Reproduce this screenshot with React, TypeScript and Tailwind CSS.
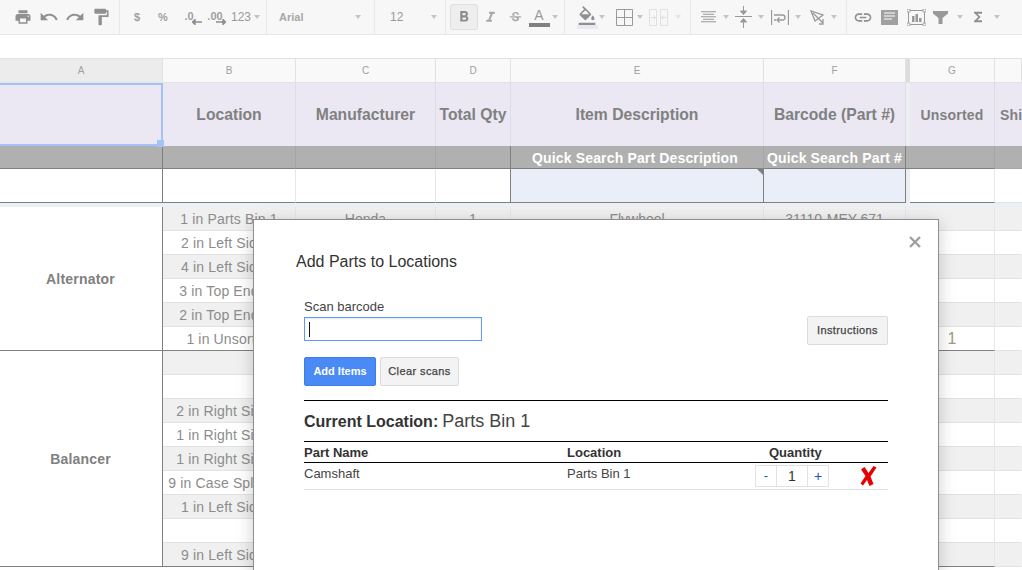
import React from 'react';
import {
  MdPrint, MdUndo, MdRedo, MdFormatPaint, MdFormatBold, MdFormatItalic, MdStrikethroughS,
  MdFormatColorFill, MdLink, MdFunctions,
} from 'react-icons/md';

const gridCols = 'grid grid-cols-[163px_133px_140px_75px_253px_142px_4px_85px_1fr]';
const iconGray = 'text-[#909090]';

// Little dropdown caret used all over the toolbar
function Caret({ className = '' }: { className?: string }) {
  return <span className={`w-0 h-0 border-x-[3.5px] border-x-transparent border-t-[4px] border-t-[#c4c4c4] ${className}`} />;
}

function Divider({ ml = 'ml-0' }: { ml?: string }) {
  return <div className={`w-px h-full bg-[#e8e8e8] shrink-0 ${ml}`} />;
}

function Slot({ w, children }: { w: string; children: React.ReactNode }) {
  return <div className={`${w} h-[34px] shrink-0 flex items-center justify-center ${iconGray}`}>{children}</div>;
}

function Toolbar() {
  return (
    <div className="h-[35px] bg-[#f7f7f7] border-b border-[#e8e8e8] flex items-center overflow-hidden font-['Liberation_Sans',sans-serif]">
      <Slot w="w-[26px] ml-[10px]"><MdPrint size={18} /></Slot>
      <Slot w="w-[26px]"><MdUndo size={20} /></Slot>
      <Slot w="w-[26px]"><MdRedo size={20} /></Slot>
      <Slot w="w-[26px]"><MdFormatPaint size={20} /></Slot>
      <Divider ml="ml-[5px]" />
      <Slot w="w-[26px] ml-[4px]"><span className="text-[11px] font-bold text-[#a0a0a0]">$</span></Slot>
      <Slot w="w-[26px]"><span className="text-[11px] font-bold text-[#a0a0a0]">%</span></Slot>
      <Slot w="w-[26px]">
        <span className="relative text-[11px] font-bold text-[#a0a0a0] -mt-[1px]">
          .0
          <svg className="absolute -right-[8px] top-[11px]" width="10" height="6" viewBox="0 0 10 6"><path d="M10 3H3M3 0.5L0.5 3 3 5.5z" stroke="#909090" strokeWidth="1.4" fill="#909090" /></svg>
        </span>
      </Slot>
      <Slot w="w-[26px]">
        <span className="relative text-[11px] font-bold text-[#a0a0a0] -mt-[1px]">
          .00
          <svg className="absolute -right-[3px] top-[11px]" width="10" height="6" viewBox="0 0 10 6"><path d="M0 3H7M7 0.5L9.5 3 7 5.5z" stroke="#909090" strokeWidth="1.4" fill="#909090" /></svg>
        </span>
      </Slot>
      <div className="w-[38px] h-[34px] shrink-0 flex items-center gap-[3px] pl-[3px] text-[12px] text-[#999999]">
        123<Caret />
      </div>
      <Divider />
      <div className="w-[107px] h-[34px] shrink-0 flex items-center justify-between pl-[12px] pr-[13px] text-[11px] font-bold text-[#a8a8a8]">
        Arial<Caret />
      </div>
      <Divider />
      <div className="w-[70px] h-[34px] shrink-0 flex items-center justify-between pl-[15px] pr-[8px] text-[12px] text-[#999999]">
        12<Caret />
      </div>
      <Divider />
      <div className="w-[28px] h-[26px] ml-[4px] shrink-0 bg-[#eeeeee] border border-[#e0e0e0] rounded-[2px] flex items-center justify-center text-[#8c8c8c]"><MdFormatBold size={18} /></div>
      <Slot w="w-[24px]"><span className="text-[#a8a8a8]"><MdFormatItalic size={17} /></span></Slot>
      <Slot w="w-[20px] ml-[3px]"><span className="text-[#a8a8a8]"><MdStrikethroughS size={15} /></span></Slot>
      <Slot w="w-[24px] ml-[2px]">
        <span className="flex flex-col items-center w-[21px]">
          <span className="text-[14px] leading-[15px] text-[#999999]">A</span>
          <span className="w-[21px] h-[4px] bg-[#808080]" />
        </span>
      </Slot>
      <Caret className="ml-[1px]" />
      <div className="w-px h-full bg-[#e8e8e8] shrink-0 ml-[6px]" />
      <Slot w="w-[22px] ml-[11px]">
        <span className="flex flex-col items-center w-[21px]">
          <MdFormatColorFill size={20} className="-mb-[1px]" />
          <span className="w-[21px] h-[4px] bg-[#ebe8f3]" />
        </span>
      </Slot>
      <Caret className="ml-[1px]" />
      <div className="w-[11px] shrink-0 h-px" />
      <svg width="17" height="17" viewBox="0 0 17 17" className="shrink-0"><path d="M.5.5h16v16H.5zM8.5.5v16M.5 8.5h16" fill="none" stroke="#999999" /></svg>
      <Caret className="ml-[4px]" />
      <svg width="19" height="17" viewBox="0 0 19 17" className="shrink-0 ml-[6px]"><path d="M.5.5h7v16h-7zM11.5.5h7v16h-7zM1.5 8.5h5M4.5 6.5l2 2-2 2M17.5 8.5h-5M14.5 6.5l-2 2 2 2" fill="none" stroke="#e0e0e0" /></svg>
      <Caret className="ml-[7px] !border-t-[#e4e4e4]" />
      <div className="w-px h-full bg-[#e8e8e8] shrink-0 ml-[9px]" />
      <svg width="15" height="12" viewBox="0 0 15 12" className="shrink-0 ml-[10px]"><path d="M0 .75h15M2 3.25h11M0 5.75h15M2 8.25h11M0 10.75h15" stroke="#999999" strokeWidth="1.1" /></svg>
      <Caret className="ml-[7px]" />
      <svg width="17" height="22" viewBox="0 0 17 22" className="shrink-0 ml-[6px]"><path d="M0 10.5h17M8.500 0v5M8.500 16v6M5.500 5h6l-3 3.500zM5.500 16h6l-3-3.500z" stroke="#999999" fill="#999999" /></svg>
      <Caret className="ml-[6px]" />
      <svg width="18" height="15" viewBox="0 0 18 15" className="shrink-0 ml-[7px]"><path d="M.5 0v15M17.500 0v15M3 5h8.500a2.500 2.500 0 0 1 0 5H7M8.500 7.500L6 10l2.500 2.500M3 10h2" fill="none" stroke="#999999" strokeWidth="1.3" /></svg>
      <Caret className="ml-[6px]" />
      <svg width="17" height="15" viewBox="0 0 17 15" className="shrink-0 ml-[9px]"><path d="M1 1l4 10 8-6zM3 3l10 10M13 9v5h-4" fill="none" stroke="#999999" strokeWidth="1.3" /></svg>
      <Caret className="ml-[4px]" />
      <div className="w-px h-full bg-[#e8e8e8] shrink-0 ml-[9px]" />
      <Slot w="w-[20px] ml-[6px]"><MdLink size={21} /></Slot>
      <svg width="17" height="15" viewBox="0 0 17 15" className="shrink-0 ml-[8px]"><path d="M0 0h17v15H0z" fill="#a0a0a0" /><path d="M3 3h11M3 6h11M3 9h8" stroke="#ffffff" /></svg>
      <svg width="19" height="17" viewBox="0 0 19 17" className="shrink-0 ml-[9px]"><path d="M1.500 1.500h16v14h-16z" fill="none" stroke="#999999" /><path d="M0 0h3v3H0zM16 0h3v3h-3zM0 14h3v3H0zM16 14h3v3h-3z" fill="#f7f7f7" stroke="#999999" strokeWidth=".8" /><path d="M5 7h2.500v6H5zM8.500 5h2.500v8H8.500zM12 9h2.500v4H12z" fill="#999999" /></svg>
      <svg width="15" height="13" viewBox="0 0 15 13" className="shrink-0 ml-[7px]"><path d="M0 0h15v2.500L9.500 7v6h-4V7L0 2.500z" fill="#999999" /></svg>
      <Caret className="ml-[9px]" />
      <Slot w="w-[16px] ml-[7px]"><MdFunctions size={20} /></Slot>
      <Caret className="ml-[8px]" />
    </div>
  );
}

// One spreadsheet cell. `dark` swaps the bottom line for the thick-looking sheet border.
function Cell({ children, className = '', dark = false }: { children?: React.ReactNode; className?: string; dark?: boolean }) {
  return (
    <div className={`relative flex items-center justify-center whitespace-nowrap overflow-hidden border-r border-b ${dark ? 'border-b-[#808080]' : 'border-b-[#e2e2e2]'} ${className || 'border-r-[#e6e6e6]'}`}>
      {children}
    </div>
  );
}

const letters = ['A', 'B', 'C', 'D', 'E', 'F', '', 'G', ''];

const heads = ['Location', 'Manufacturer', 'Total Qty', 'Item Description', 'Barcode (Part #)'];

type PartRow = { loc?: string; maker?: string; qty?: string; desc?: string; code?: string; unsorted?: string; dark?: boolean };

const partRows: PartRow[] = [
  { loc: '1 in Parts Bin 1', maker: 'Honda', qty: '1', desc: 'Flywheel', code: '31110-MEY-671' },
  { loc: '2 in Left Side 1' },
  { loc: '4 in Left Side 1' },
  { loc: '3 in Top End 12' },
  { loc: '2 in Top End 12' },
  { loc: '1 in Unsorted', unsorted: '1', dark: true },
  {},
  {},
  { loc: '2 in Right Side 1' },
  { loc: '1 in Right Side 1' },
  { loc: '1 in Right Side 1' },
  { loc: '9 in Case Splitter 1' },
  { loc: '1 in Left Side 1' },
  {},
  { loc: '9 in Left Side 1', dark: true },
];

function Sheet() {
  return (
    <div className={`${gridCols} border-t border-[#e2e2e2] font-['Liberation_Sans',sans-serif]`}>
      {/* Column letters */}
      {letters.map((l, i) =>
        i === 6 ? (
          <div key={i} className="h-[24px] bg-[#dddddd] border-b border-[#e2e2e2]" />
        ) : (
          <div key={i} className={`h-[24px] flex items-center justify-center text-[10px] text-[#a0a0a0] border-r border-b border-[#e2e2e2] ${i === 0 ? 'bg-[#ececec]' : 'bg-[#f9f9f9]'}`}>{l}</div>
        )
      )}

      {/* Title row */}
      <div className="relative h-[63px] bg-[#ebe8f3] border-2 border-[#a3c2f8] border-l-0">
        <span className="absolute -right-[3px] -bottom-[3px] w-[7px] h-[7px] bg-[#a3c2f8] z-10" />
      </div>
      {heads.map((t) => (
        <div key={t} className="h-[63px] bg-[#ebe8f3] border-r border-[#dedde5] flex items-center justify-center text-[15.7px] font-bold text-[#808080] whitespace-nowrap">{t}</div>
      ))}
      <div className="bg-[#eceef2]" />
      <div className="h-[63px] bg-[#ebe8f3] border-r border-[#dedde5] flex items-center justify-center pt-[2px] text-[14px] font-bold tracking-[0.2px] text-[#808080]">Unsorted</div>
      <div className="h-[63px] bg-[#ebe8f3] flex items-center pt-[2px] pl-[5px] text-[14px] font-bold tracking-[0.2px] text-[#808080] overflow-hidden">Shipped</div>

      {/* Quick search labels */}
      <div className="h-[23px] bg-[#b0b0b0] border-r border-r-[#808080] border-b border-b-[#808080]" />
      <div className="bg-[#b0b0b0] border-r border-r-[#a6a6a6] border-b border-b-[#808080]" />
      <div className="bg-[#b0b0b0] border-r border-r-[#a6a6a6] border-b border-b-[#808080]" />
      <div className="bg-[#b0b0b0] border-r border-r-[#808080] border-b border-b-[#808080]" />
      <div className="bg-[#b0b0b0] border-r border-r-[#a6a6a6] border-b border-b-[#808080] flex items-center justify-center pt-[2px] pr-[4px] text-[14px] leading-[18px] font-bold tracking-[0.15px] text-white whitespace-nowrap">Quick Search Part Description</div>
      <div className="bg-[#b0b0b0] border-r border-r-[#808080] border-b border-b-[#808080] flex items-center justify-center pt-[2px] text-[14px] leading-[18px] font-bold tracking-[0.15px] text-white whitespace-nowrap">Quick Search Part #</div>
      <div className="bg-[#b0b0b0] border-b border-b-[#808080]" />
      <div className="bg-[#b0b0b0] border-r border-r-[#a6a6a6] border-b border-b-[#808080]" />
      <div className="bg-[#b0b0b0] border-b border-b-[#a6a6a6]" />

      {/* Search inputs */}
      <Cell dark className="h-[34px] border-r-[#808080]" />
      <Cell dark className="border-r-[#e6e6e6]" />
      <Cell dark className="border-r-[#e6e6e6]" />
      <Cell dark className="border-r-[#808080]" />
      <Cell dark className="bg-[#e9eef9] border-r-[#808080]">
        <span className="absolute top-0 right-0 w-0 h-0 border-l-[6px] border-l-transparent border-t-[6px] border-t-[#808080]" />
      </Cell>
      <Cell dark className="bg-[#e9eef9] border-r-[#808080]" />
      <div className="bg-[#eceef2]" />
      <Cell dark className="border-r-[#e6e6e6]" />
      <div className="border-b border-[#e2e2e2]" />

      {/* Freeze band */}
      <div className="col-span-9 h-[4px] bg-[#eceff3]" />

      {/* Data, column A is merged over each group */}
      {partRows.map((r, i) => {
        const zebra = i % 2 === 0 ? 'bg-[#f0f0f0]' : 'bg-white';
        return (
          <React.Fragment key={i}>
            {i === 0 && <div className="row-span-6 flex items-center justify-center pt-[2px] pr-px text-[14px] font-bold tracking-[0.2px] text-[#808080] border-r border-b border-[#808080]">Alternator</div>}
            {i === 6 && <div className="row-span-9 flex items-center justify-center pt-[2px] pr-px text-[14px] font-bold tracking-[0.2px] text-[#808080] border-r border-b border-[#808080]">Balancer</div>}
            <Cell dark={r.dark} className={`h-[24px] pt-px text-[14px] leading-[20px] tracking-[0.15px] text-[#8c8c8c] border-r-[#e6e6e6] ${zebra}`}>{r.loc}</Cell>
            <Cell dark={r.dark} className={`pt-px text-[14px] leading-[20px] text-[#8c8c8c] border-r-[#e6e6e6] ${zebra}`}>{r.maker}</Cell>
            <Cell dark={r.dark} className={`pt-px text-[14px] leading-[20px] text-[#8c8c8c] border-r-[#e6e6e6] ${zebra}`}>{r.qty}</Cell>
            <Cell dark={r.dark} className={`pt-px text-[14px] leading-[20px] text-[#8c8c8c] border-r-[#e6e6e6] ${zebra}`}>{r.desc}</Cell>
            <Cell dark={r.dark} className={`pt-px text-[14px] leading-[20px] text-[#8c8c8c] border-r-[#e6e6e6] ${zebra}`}>{r.code}</Cell>
            <div className="bg-[#eceff3]" />
            <Cell dark={r.dark} className={`text-[16px] leading-[20px] text-[#a39a80] border-r-[#e6e6e6] ${zebra}`}>{r.unsorted}</Cell>
            <Cell className={`border-r-transparent ${zebra}`} />
          </React.Fragment>
        );
      })}
    </div>
  );
}

function GrayButton({ children, className = '' }: { children: React.ReactNode; className?: string }) {
  return (
    <button className={`h-[29px] bg-[#f3f3f3] border border-[#dcdcdc] rounded-[2px] text-[11px] tracking-[0.4px] [-webkit-text-stroke:0.25px_#444444] text-[#444444] ${className}`}>{children}</button>
  );
}

function Modal() {
  return (
    <div className="absolute left-[253px] top-[219px] w-[686px] h-[360px] bg-white border border-[#8f8f8f] shadow-[0_4px_16px_rgba(0,0,0,0.2)] text-[#333333] font-['Liberation_Sans',sans-serif]">
      <button className="absolute right-[17px] top-[16px]">
        <svg width="12" height="12" viewBox="0 0 12 12"><path d="M1 1l10 10M11 1L1 11" stroke="#a0a0a0" strokeWidth="2.4" /></svg>
      </button>
      <h2 className="pt-[32px] pl-[42px] text-[16px] leading-[20px] font-normal text-[#333333]">Add Parts to Locations</h2>

      <div className="pl-[50px] pr-[50px] pt-[27px]">
        <div className="flex items-end justify-between">
          <div>
            <div className="text-[13px] leading-[15px] text-[#444444]">Scan barcode</div>
            <div className="mt-[3px] w-[178px] h-[24px] border border-[#5f9bf5] shadow-[inset_0_1px_2px_rgba(0,0,0,0.1)] flex items-center pl-[4px]">
              <span className="w-px h-[15px] bg-[#111111]" />
            </div>
          </div>
          <GrayButton className="w-[81px] -mb-[4px]">Instructions</GrayButton>
        </div>

        <div className="flex gap-[4px] mt-[16px]">
          <button className="w-[72px] h-[29px] bg-[#4a8af4] border border-[#3f7de6] rounded-[2px] text-[11px] font-bold text-white">Add Items</button>
          <GrayButton className="w-[79px]">Clear scans</GrayButton>
        </div>

        <div className="mt-[14px] border-t border-black pt-[10px] h-[41px] flex items-baseline text-[16px] leading-[20px]">
          <span className="font-bold">Current Location:</span>
          <span className="ml-[4px] text-[18px] text-[#444444]">Parts Bin 1</span>
        </div>

        <div className="grid grid-cols-[263px_164px_1fr] border-t border-b border-black h-[22px] items-center text-[13px] leading-[15px] font-bold text-[#333333]">
          <span>Part Name</span>
          <span>Location</span>
          <span className="pl-[38px]">Quantity</span>
        </div>

        <div className="grid grid-cols-[263px_188px_1fr] border-b border-[#e2e2e2] h-[27px] text-[13px] leading-[15px] text-[#444444]">
          <span className="pt-[3px]">Camshaft</span>
          <span className="pt-[3px]">Parts Bin 1</span>
          <div className="flex items-start pt-[2px]">
            <div className="w-[74px] h-[22px] border border-[#e2e2e2] grid grid-cols-[21px_1fr_21px] text-center leading-[20px]">
              <span className="border-r border-[#e2e2e2] text-[#1155cc]">-</span>
              <span className="text-[14px] text-[#333333]">1</span>
              <span className="border-l border-[#e2e2e2] text-[#1155cc] text-[14px]">+</span>
            </div>
            <svg width="17" height="20" viewBox="0 0 17 20" className="ml-[31px] mt-[1px]">
              <path d="M1 3.500L4.500 1 8.500 7 13.500 0 16.500 1.500 10.500 10.500 13.500 18 9.500 20 7 14 3 19.500 0.500 17.500 5.500 10z" fill="#e60000" />
            </svg>
          </div>
        </div>
      </div>
    </div>
  );
}

export default function App() {
  return (
    <div className="relative w-[1022px] h-[570px] overflow-hidden bg-white">
      <Toolbar />
      <div className="h-[23px] bg-white" />
      <Sheet />
      <Modal />
    </div>
  );
}
